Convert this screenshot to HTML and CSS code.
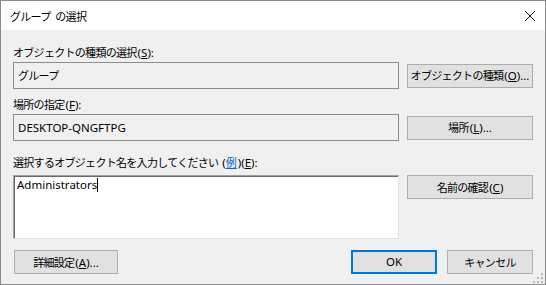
FILE: index.html
```html
<!DOCTYPE html>
<html lang="ja">
<head>
    <meta charset="UTF-8">
    <title>グループ の選択</title>
    <link rel="stylesheet" href="styles.css">
</head>
<body>
    <div class="window">
        <div class="titlebar">
            <span class="title">グループ の選択</span>
            <svg class="close" width="12" height="12" viewBox="0 0 12 12">
                <path d="M1 1 L11 11 M11 1 L1 11" stroke="#111" stroke-width="1" fill="none"/>
            </svg>
        </div>
        <div class="content">
            <div class="label first">オブジェクトの種類の選択<span class="key">(<u>S</u>):</span></div>
            <div class="row">
                <div class="box">グループ</div>
                <button class="btn">オブジェクトの種類<span class="key">(<u>O</u>)...</span></button>
            </div>

            <div class="label second">場所の指定<span class="key">(<u>F</u>):</span></div>
            <div class="row">
                <div class="box latin">DESKTOP-QNGFTPG</div>
                <button class="btn">場所<span class="key">(<u>L</u>)...</span></button>
            </div>

            <div class="label third">選択するオブジェクト名を入力してください<span class="key"> (</span><a class="link">例</a><span class="key">)(<u>E</u>):</span></div>
            <div class="row top">
                <div class="textarea latin">Administrators<span class="caret"></span></div>
                <button class="btn">名前の確認<span class="key">(<u>C</u>)</span></button>
            </div>

            <div class="footer">
                <button class="btn advanced">詳細設定<span class="key">(<u>A</u>)...</span></button>
                <span class="spacer"></span>
                <button class="btn small default latin">OK</button>
                <button class="btn small">キャンセル</button>
            </div>

            <svg class="grip" width="11" height="11" viewBox="0 0 11 11">
                <rect x="8" y="0" width="2" height="2" fill="#b8b8b8"/>
                <rect x="4" y="4" width="2" height="2" fill="#b8b8b8"/>
                <rect x="8" y="4" width="2" height="2" fill="#b8b8b8"/>
                <rect x="0" y="8" width="2" height="2" fill="#b8b8b8"/>
                <rect x="4" y="8" width="2" height="2" fill="#b8b8b8"/>
                <rect x="8" y="8" width="2" height="2" fill="#b8b8b8"/>
            </svg>
        </div>
    </div>
</body>
</html>
```

FILE: styles.css
```css
/* Windows 10 style dialog */
body {
    margin: 0;
    font-family: "Noto Sans CJK JP", sans-serif;
    font-size: 11px;
    letter-spacing: -0.7px;
    word-spacing: 3px;
    color: #000;
    background: #f0f0f0;
}

.latin,
.key {
    font-family: "Noto Sans", "Noto Sans CJK JP", sans-serif;
    font-size: 11.5px;
    letter-spacing: 0;
    word-spacing: 0;
}

.key {
    margin-left: 1px;
}

.window {
    width: 546px;
    height: 285px;
    box-sizing: border-box;
    border: 1px solid #8a8a8a;
    background: #f0f0f0;
    display: flex;
    flex-direction: column;
}

.titlebar {
    height: 29px;
    background: #ffffff;
    display: flex;
    align-items: center;
    padding: 0 8px 0 9px;
    flex-shrink: 0;
}

.title {
    flex: 1;
    line-height: 16px;
}

.close {
    margin-right: 1px;
}

.content {
    position: relative;
    flex: 1;
    padding: 14px 12px 0 12px;
}

.label {
    line-height: 16px;
    height: 16px;
    white-space: nowrap;
}

.label.second {
    margin-top: 7px;
}

.label.third {
    margin-top: 13px;
}

.link {
    color: #0066cc;
    text-decoration: underline;
    letter-spacing: 0;
}

.row {
    display: flex;
    align-items: center;
    gap: 8px;
    margin-top: 2px;
}

.row.top {
    align-items: flex-start;
    margin-top: 5px;
}

.box {
    flex: 1;
    height: 27px;
    box-sizing: border-box;
    border: 1px solid #8c8c8c;
    background: #f0f0f0;
    padding: 0 4px;
    line-height: 25px;
    white-space: nowrap;
}

.textarea {
    flex: 1;
    height: 64px;
    box-sizing: border-box;
    background: #ffffff;
    border-top: 1px solid #a0a0a0;
    border-left: 1px solid #a0a0a0;
    border-right: 1px solid #e3e3e3;
    border-bottom: 1px solid #e3e3e3;
    box-shadow: inset 1px 1px 0 #696969;
    padding: 1px 3px;
    line-height: 15px;
}

.caret {
    display: inline-block;
    width: 1px;
    height: 14px;
    background: #000;
    vertical-align: -3px;
}

.btn {
    font: inherit;
    letter-spacing: inherit;
    width: 126px;
    height: 24px;
    box-sizing: border-box;
    background: #e1e1e1;
    border: 1px solid #adadad;
    padding: 0;
    color: #000;
    line-height: 20px;
    flex-shrink: 0;
    white-space: nowrap;
}

.btn.latin {
    font-family: "Noto Sans", sans-serif;
    font-size: 11.5px;
    letter-spacing: 0;
}

.footer {
    display: flex;
    gap: 10px;
    margin-top: 11px;
    padding-left: 1px;
}

.spacer {
    flex: 1;
}

.btn.advanced {
    width: 104px;
}

.btn.small {
    width: 86px;
}

.btn.default {
    border: 2px solid #0078d7;
}

.grip {
    position: absolute;
    right: 1px;
    bottom: 0;
}
```
